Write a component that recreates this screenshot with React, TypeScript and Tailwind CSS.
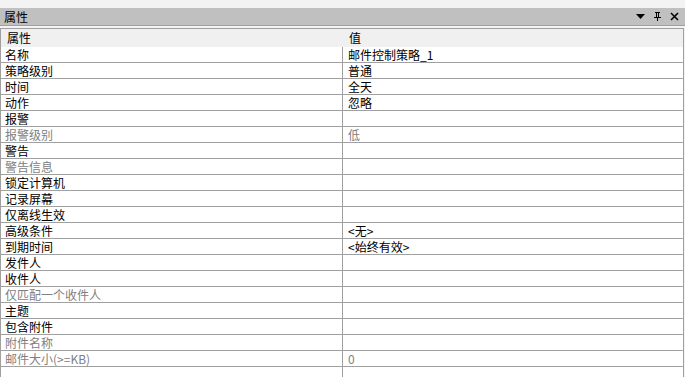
import React from 'react'

type Row = { name: string; value?: string; disabled?: boolean }

const ROWS: Row[] = [
  { name: '名称', value: '邮件控制策略_1' },
  { name: '策略级别', value: '普通' },
  { name: '时间', value: '全天' },
  { name: '动作', value: '忽略' },
  { name: '报警' },
  { name: '报警级别', value: '低', disabled: true },
  { name: '警告' },
  { name: '警告信息', disabled: true },
  { name: '锁定计算机' },
  { name: '记录屏幕' },
  { name: '仅离线生效' },
  { name: '高级条件', value: '<无>' },
  { name: '到期时间', value: '<始终有效>' },
  { name: '发件人' },
  { name: '收件人' },
  { name: '仅匹配一个收件人', disabled: true },
  { name: '主题' },
  { name: '包含附件' },
  { name: '附件名称', disabled: true },
  { name: '邮件大小(>=KB)', value: '0', disabled: true },
]

const FONT = { fontFamily: '"Noto Sans CJK SC", "Liberation Sans", sans-serif' }

export default function App() {
  return (
    <div className="h-[377px] w-[685px] overflow-hidden bg-[#f3f3f3] pt-[8px] text-[12px] leading-none text-black" style={FONT}>
      {/* Title bar */}
      <div className="flex h-[18px] items-center justify-between border-b border-[#a0a0a0] bg-[#c0c0c0] pl-[4px] pr-[6px]">
        <span className="text-[12px]">属性</span>
        <div className="flex items-center gap-[8px]">
          <svg width="9" height="9" viewBox="0 0 9 9">
            <path d="M0 2h9L4.5 7z" fill="#000" />
          </svg>
          <svg width="9" height="9" viewBox="0 0 9 9">
            <path d="M2 0h5v1H6v4h2v1H5v3H4V6H1V5h2V1H2z" fill="#000" />
            <path d="M4 1h1v4H4z" fill="#c0c0c0" />
          </svg>
          <svg width="9" height="9" viewBox="0 0 9 9">
            <path d="M1 1l7 7M8 1L1 8" stroke="#000" strokeWidth="1.6" />
          </svg>
        </div>
      </div>

      {/* Grid */}
      <div className="mt-[2px] mr-[1px] h-[400px] border-t border-r border-l border-[#a0a0a0] bg-white">
        <div className="flex h-[18px] items-center bg-[#f0f0f0]">
          <div className="w-[342px] pl-[6px]">属性</div>
          <div className="pl-[6px]">值</div>
        </div>
        {ROWS.map((r) => (
          <div key={r.name} className="flex h-[16px] border-b border-[#a0a0a0]">
            <div className={`flex w-[342px] items-center border-r border-[#a0a0a0] pl-[4px] ${r.disabled ? 'text-[#808080]' : ''}`}>
              {r.name}
            </div>
            <div className={`flex flex-1 items-center pl-[5px] ${r.disabled ? 'text-[#808080]' : ''}`}>
              {r.value}
            </div>
          </div>
        ))}
        <div className="flex h-[40px]">
          <div className="w-[342px] border-r border-[#a0a0a0]" />
        </div>
      </div>
    </div>
  )
}
